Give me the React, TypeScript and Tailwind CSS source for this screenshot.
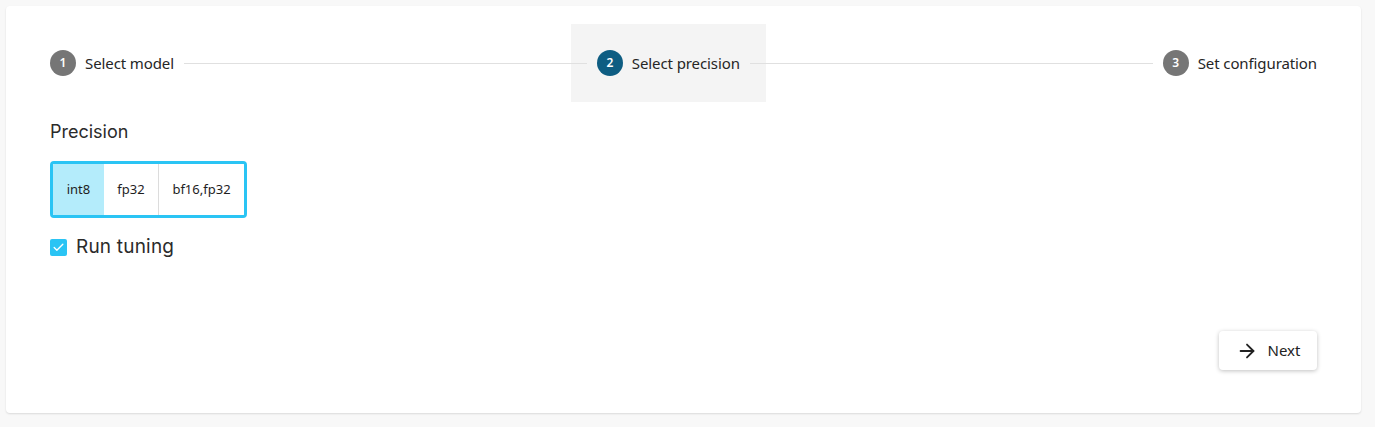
import { Fragment, useState } from 'react';
import { ArrowRight, Check } from 'lucide-react';

const steps = ['Select model', 'Select precision', 'Set configuration'];
const precisions = ['int8', 'fp32', 'bf16,fp32'];

function StepCircle({ n, active }: { n: number; active: boolean }) {
  return (
    <span
      className={`flex h-[26px] w-[26px] items-center justify-center rounded-full text-[12px] font-semibold text-white ${
        active ? 'bg-[#0e5d82]' : 'bg-[#767676]'
      }`}
    >
      {n}
    </span>
  );
}

export default function App() {
  const [precision, setPrecision] = useState('int8');
  const [tuning, setTuning] = useState(true);
  const active = 1;

  return (
    <div className="min-h-screen bg-[#f8f8f8] pt-[6px] font-['Noto_Sans',sans-serif]">
      <div className="ml-[6px] h-[407px] w-[1355px] rounded-[4px] bg-white px-[44px] pt-[18px] shadow-[0_1px_2px_rgba(0,0,0,0.12)]">
        {/* Stepper */}
        <div className="-mx-[10px] flex items-center">
          {steps.map((label, i) => (
            <Fragment key={label}>
              <div
                className={`flex shrink-0 items-center gap-[9px] ${
                  i === active ? '-mx-4 bg-[#f4f4f4] px-[26px] py-[26px]' : 'px-[10px] py-[26px]'
                }`}
              >
                <StepCircle n={i + 1} active={i === active} />
                <span className="text-[15px] leading-[20px] tracking-[-0.1px] text-[#262626]">{label}</span>
              </div>
              {i < steps.length - 1 && <div className="relative z-10 h-px flex-1 bg-[#e0e0e0]" />}
            </Fragment>
          ))}
        </div>

        {/* Precision */}
        <h2 className="mt-[18px] font-['Inter',sans-serif] text-[18px] leading-[24px] text-[#2b2b2b]">Precision</h2>
        <div className="mt-[17px] inline-flex h-[57px] overflow-hidden rounded-[4px] border-[3px] border-[#2ac4f4]">
          {precisions.map((p, i) => (
            <button
              key={p}
              onClick={() => setPrecision(p)}
              className={`flex items-center justify-center text-[13px] text-[#1e1e1e] ${
                i === 0 ? 'w-[51px]' : i === 1 ? 'w-[54px]' : 'w-[86px] border-l border-[#dcdcdc]'
              } ${precision === p ? 'bg-[#b4ecfb]' : 'bg-white'}`}
            >
              {p}
            </button>
          ))}
        </div>

        {/* Run tuning */}
        <label className="mt-[20px] flex h-[18px] items-center gap-[9px]">
          <span
            onClick={() => setTuning(!tuning)}
            className={`flex h-[17px] w-[17px] items-center justify-center rounded-[2px] ${
              tuning ? 'bg-[#2ac4f4]' : 'border-2 border-[#888]'
            }`}
          >
            {tuning && <Check className="h-[13px] w-[13px] text-white" strokeWidth={2.5} />}
          </span>
          <span className="font-['Inter',sans-serif] text-[19px] leading-[24px] tracking-[0.2px] text-[#2b2b2b]">
            Run tuning
          </span>
        </label>

        {/* Footer */}
        <div className="mt-[75px] flex justify-end">
          <button className="flex h-[39px] w-[98px] items-center justify-center gap-[10px] rounded-[4px] bg-white text-[15px] text-[#222] shadow-[0_1px_4px_rgba(0,0,0,0.25)]">
            <ArrowRight className="h-[22px] w-[22px]" strokeWidth={2} />
            Next
          </button>
        </div>
      </div>
    </div>
  );
}
